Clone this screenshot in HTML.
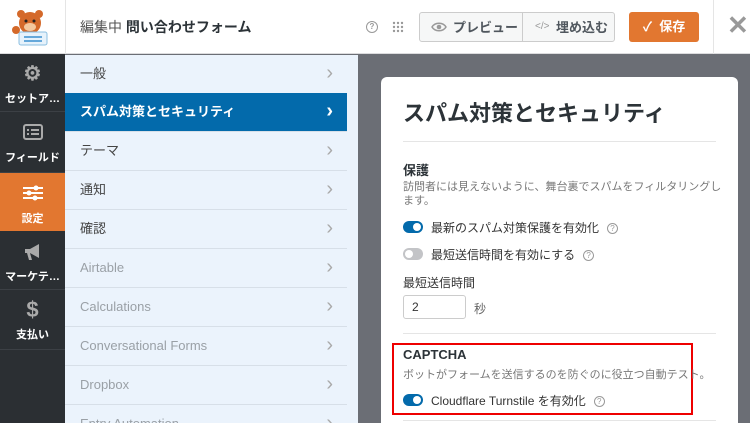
<!DOCTYPE html>
<html><head><meta charset="utf-8"><style>
*{box-sizing:border-box;margin:0;padding:0}
html,body{width:750px;height:423px;overflow:hidden}
body{position:relative;font-family:"Liberation Sans","Noto Sans CJK JP",sans-serif;background:#6b6e75}
.abs{position:absolute}
.top{left:0;top:0;width:750px;height:54px;background:#fff;border-bottom:1px solid #dcdcde}
.side{left:0;top:54px;width:65px;height:369px;background:#2b2f33}
.si{position:absolute;left:0;width:65px;color:#fff;font-size:11px;font-weight:bold;text-align:center;border-bottom:1px solid #3c4045}
.panel{left:65px;top:55px;width:293px;height:368px;background:#ebf3fc;overflow:hidden}
.row{position:absolute;left:0;width:282px;height:39px;border-bottom:1px solid #d7dfe8;font-size:13px;color:#444;padding-left:15px;line-height:38px}
.row.g{color:#9aa0a6}
.row::after{content:"›";position:absolute;right:14px;top:0;font-size:20px;color:#aaa;line-height:36px}
.row.a{background:#036aab;color:#fff;font-weight:bold}
.row.a::after{color:#fff}
.card{left:381px;top:77px;width:357px;height:346px;background:#fff;border-radius:6px 6px 0 0;overflow:hidden}
.tg{position:absolute;width:20px;height:12px;border-radius:6px;background:#036aab}
.tg::after{content:"";position:absolute;right:2px;top:2px;width:8px;height:8px;border-radius:50%;background:#fff}
.tg.off{background:#c3c4c7}.tg.off::after{left:2px;right:auto}
.q{display:inline-block;width:11px;height:11px;border:1px solid #999;border-radius:50%;font-size:8px;line-height:9px;text-align:center;color:#999;vertical-align:1px;margin-left:8px}
.lbl{font-size:12px;color:#333}
</style></head><body>
<div class="abs top">
 <svg class="abs" style="left:8px;top:8px" width="44" height="38" viewBox="0 0 44 38"><circle cx="22" cy="15" r="11" fill="#d4692a"/><circle cx="13" cy="6" r="4" fill="#d4692a"/><circle cx="31" cy="6" r="4" fill="#d4692a"/><ellipse cx="22" cy="19" rx="6" ry="4" fill="#f3c89e"/><circle cx="18" cy="13" r="1.5" fill="#222"/><circle cx="26" cy="13" r="1.5" fill="#222"/><rect x="11" y="24" width="28" height="13" rx="2" fill="#e6f2fb" stroke="#8bbfe0"/><line x1="16" y1="29" x2="34" y2="29" stroke="#3a8fd0" stroke-width="1.5"/><line x1="16" y1="33" x2="34" y2="33" stroke="#3a8fd0" stroke-width="1.5"/><circle cx="8" cy="22" r="4" fill="#d4692a"/></svg>
 <div class="abs" style="left:65px;top:0;width:1px;height:54px;background:#e5e5e5"></div>
 <div class="abs" style="left:80px;top:17px;font-size:14px;color:#555">編集中 <b style="color:#2c3338">問い合わせフォーム</b></div>
 <div class="abs" style="left:366px;top:21px;width:12px;height:12px;border:1.5px solid #999;border-radius:50%;font-size:8px;text-align:center;line-height:9px;color:#999;font-weight:bold">?</div>
 <svg class="abs" style="left:392px;top:21px" width="12" height="12"><g fill="#999"><circle cx="2" cy="2" r="1.2"/><circle cx="6" cy="2" r="1.2"/><circle cx="10" cy="2" r="1.2"/><circle cx="2" cy="6" r="1.2"/><circle cx="6" cy="6" r="1.2"/><circle cx="10" cy="6" r="1.2"/><circle cx="2" cy="10" r="1.2"/><circle cx="6" cy="10" r="1.2"/><circle cx="10" cy="10" r="1.2"/></g></svg>
 <div class="abs" style="left:419px;top:12px;width:196px;height:30px;border:1px solid #ccc;border-radius:3px;background:#f6f7f7"></div>
 <div class="abs" style="left:522px;top:12px;width:1px;height:30px;background:#ccc"></div>
 <svg class="abs" style="left:431px;top:21px" width="16" height="12" viewBox="0 0 16 12"><path d="M1 6C4 1 12 1 15 6C12 11 4 11 1 6Z" fill="none" stroke="#999" stroke-width="1.5"/><circle cx="8" cy="6" r="2.3" fill="#999"/></svg>
 <div class="abs" style="left:453px;top:17px;font-size:13px;font-weight:bold;color:#50575e">プレビュー</div>
 <div class="abs" style="left:535px;top:21px;font-size:10px;color:#999">&lt;/&gt;</div>
 <div class="abs" style="left:556px;top:17px;font-size:13px;font-weight:bold;color:#50575e">埋め込む</div>
 <div class="abs" style="left:629px;top:12px;width:70px;height:30px;border-radius:3px;background:#e27730;color:#fff;font-size:13px;font-weight:bold;text-align:center;line-height:30px">✓&nbsp; 保存</div>
 <div class="abs" style="left:713px;top:0;width:1px;height:54px;background:#e5e5e5"></div>
 <div class="abs" style="left:727px;top:10px;font-size:26px;color:#999;font-weight:bold">✕</div>
</div>
<div class="abs side">
 <div class="si" style="top:0;height:58px;padding-top:10px"><div style="font-size:20px;color:#aaa;line-height:20px">⚙</div><div style="margin-top:6px">セットア…</div></div>
 <div class="si" style="top:58px;height:61px;padding-top:12px"><svg width="20" height="16"><rect x="1" y="1" width="18" height="14" rx="2" fill="none" stroke="#aaa" stroke-width="2"/><g fill="#aaa"><rect x="4" y="5" width="2" height="2"/><rect x="8" y="5" width="8" height="2"/><rect x="4" y="9" width="2" height="2"/><rect x="8" y="9" width="8" height="2"/></g></svg><div style="margin-top:6px">フィールド</div></div>
 <div class="si" style="top:119px;height:58px;background:#e27730;padding-top:12px;border:none"><svg width="22" height="16"><g stroke="#fff" stroke-width="2"><line x1="1" y1="3" x2="21" y2="3"/><line x1="1" y1="8" x2="21" y2="8"/><line x1="1" y1="13" x2="21" y2="13"/></g><g fill="#fff"><circle cx="14" cy="3" r="2.5"/><circle cx="7" cy="8" r="2.5"/><circle cx="13" cy="13" r="2.5"/></g></svg><div style="margin-top:6px">設定</div></div>
 <div class="si" style="top:177px;height:59px;padding-top:12px"><svg width="20" height="18" viewBox="0 0 20 18"><path d="M2 6H7L16 1V15L7 10H2Z" fill="#aaa"/><path d="M4 10L6 17H9L7 10Z" fill="#aaa"/></svg><div style="margin-top:4px">マーケテ…</div></div>
 <div class="si" style="top:236px;height:60px;padding-top:8px"><div style="font-size:22px;color:#aaa;line-height:24px">$</div><div style="margin-top:4px">支払い</div></div>
</div>
<div class="abs panel">
 <div class="row" style="top:0">一般</div>
 <div class="row a" style="top:38px">スパム対策とセキュリティ</div>
 <div class="row" style="top:77px">テーマ</div>
 <div class="row" style="top:116px">通知</div>
 <div class="row" style="top:155px">確認</div>
 <div class="row g" style="top:194px">Airtable</div>
 <div class="row g" style="top:233px">Calculations</div>
 <div class="row g" style="top:272px">Conversational Forms</div>
 <div class="row g" style="top:311px">Dropbox</div>
 <div class="row g" style="top:350px">Entry Automation</div>
</div>
<div class="abs card">
 <div class="abs" style="left:22px;top:19px;font-size:22px;font-weight:bold;color:#2c3338">スパム対策とセキュリティ</div>
 <div class="abs" style="left:22px;top:64px;width:313px;height:1px;background:#e5e5e5"></div>
 <div class="abs" style="left:22px;top:86px;font-size:13px;font-weight:bold;color:#2c3338;line-height:15px">保護</div>
 <div class="abs" style="left:22px;top:103px;width:324px;font-size:11px;color:#777;line-height:14px">訪問者には見えないように、舞台裏でスパムをフィルタリングします。</div>
 <div class="tg" style="left:22px;top:144px"></div><div class="abs lbl" style="left:50px;top:142px">最新のスパム対策保護を有効化<span class="q">?</span></div>
 <div class="tg off" style="left:22px;top:171px"></div><div class="abs lbl" style="left:50px;top:169px">最短送信時間を有効にする<span class="q">?</span></div>
 <div class="abs lbl" style="left:22px;top:197px">最短送信時間</div>
 <div class="abs" style="left:22px;top:218px;width:63px;height:24px;border:1px solid #ccc;border-radius:3px;font-size:12px;padding:4px 8px;color:#333">2</div>
 <div class="abs lbl" style="left:93px;top:223px;color:#666">秒</div>
 <div class="abs" style="left:22px;top:256px;width:313px;height:1px;background:#e5e5e5"></div>
 <div class="abs" style="left:11px;top:266px;width:301px;height:72px;border:2px solid #e00"></div>
 <div class="abs" style="left:22px;top:270px;font-size:13px;font-weight:bold;color:#2c3338">CAPTCHA</div>
 <div class="abs" style="left:22px;top:289px;font-size:11px;color:#777">ボットがフォームを送信するのを防ぐのに役立つ自動テスト。</div>
 <div class="tg" style="left:22px;top:317px"></div><div class="abs lbl" style="left:50px;top:315px">Cloudflare Turnstile を有効化<span class="q">?</span></div>
 <div class="abs" style="left:22px;top:343px;width:313px;height:1px;background:#e5e5e5"></div>
</div>
</body></html>
